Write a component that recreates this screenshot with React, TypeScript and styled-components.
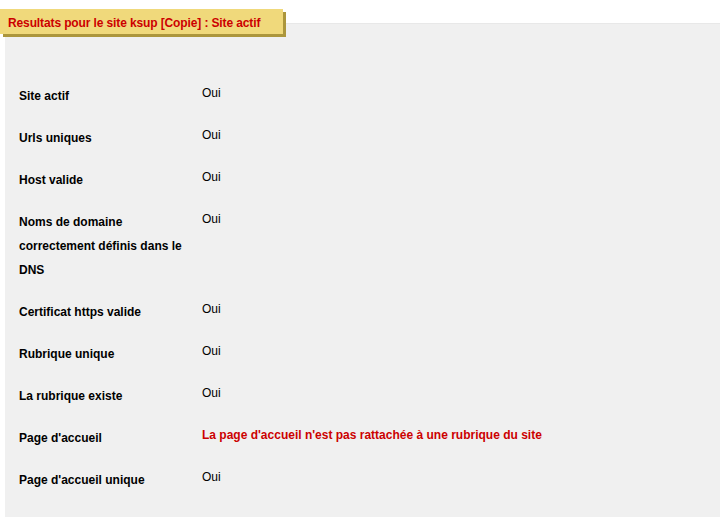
import React from "react";
import styled, { createGlobalStyle } from "styled-components";

const Global = createGlobalStyle`
  html, body { margin: 0; padding: 0; background: #ffffff; }
  body { font-family: Arial, "Liberation Sans", sans-serif; font-size: 12px; color: #000; }
`;

const Page = styled.div`
  position: relative;
  padding: 23px 0 0 5px;
  min-height: 517px;
  box-sizing: border-box;
`;

const TitleBadge = styled.div`
  position: absolute;
  top: 9px;
  left: 0;
  width: 283px;
  height: 25px;
  box-sizing: border-box;
  padding: 4px 0 0 8px;
  background: #f0d97b;
  box-shadow: 3px 3px 0 #ac963c;
  color: #cc0000;
  font-weight: bold;
  font-size: 12px;
  line-height: 20px;
  letter-spacing: -0.12px;
  white-space: nowrap;
`;

const Panel = styled.div`
  background: #f0f0f0;
  border-top: 1px solid #e8e8e8;
  min-height: 494px;
  box-sizing: border-box;
  padding: 60px 0 0 14px;
`;

const Row = styled.div`
  display: grid;
  grid-template-columns: 175px 1fr;
  column-gap: 8px;
  padding-bottom: 18px;
`;

const Label = styled.div`
  font-weight: bold;
  line-height: 24px;
`;

const Value = styled.div<{ $error?: boolean }>`
  line-height: 18px;
  font-weight: ${(p) => (p.$error ? "bold" : "normal")};
  color: ${(p) => (p.$error ? "#cc0000" : "#000")};
`;

const rows: { label: string; value: string; error?: boolean }[] = [
  { label: "Site actif", value: "Oui" },
  { label: "Urls uniques", value: "Oui" },
  { label: "Host valide", value: "Oui" },
  { label: "Noms de domaine correctement définis dans le DNS", value: "Oui" },
  { label: "Certificat https valide", value: "Oui" },
  { label: "Rubrique unique", value: "Oui" },
  { label: "La rubrique existe", value: "Oui" },
  {
    label: "Page d'accueil",
    value: "La page d'accueil n'est pas rattachée à une rubrique du site",
    error: true,
  },
  { label: "Page d'accueil unique", value: "Oui" },
];

export default function App() {
  return (
    <Page>
      <Global />
      <TitleBadge>Resultats pour le site ksup [Copie] : Site actif</TitleBadge>
      <Panel>
        {rows.map((r) => (
          <Row key={r.label}>
            <Label>{r.label}</Label>
            <Value $error={r.error}>{r.value}</Value>
          </Row>
        ))}
      </Panel>
    </Page>
  );
}
